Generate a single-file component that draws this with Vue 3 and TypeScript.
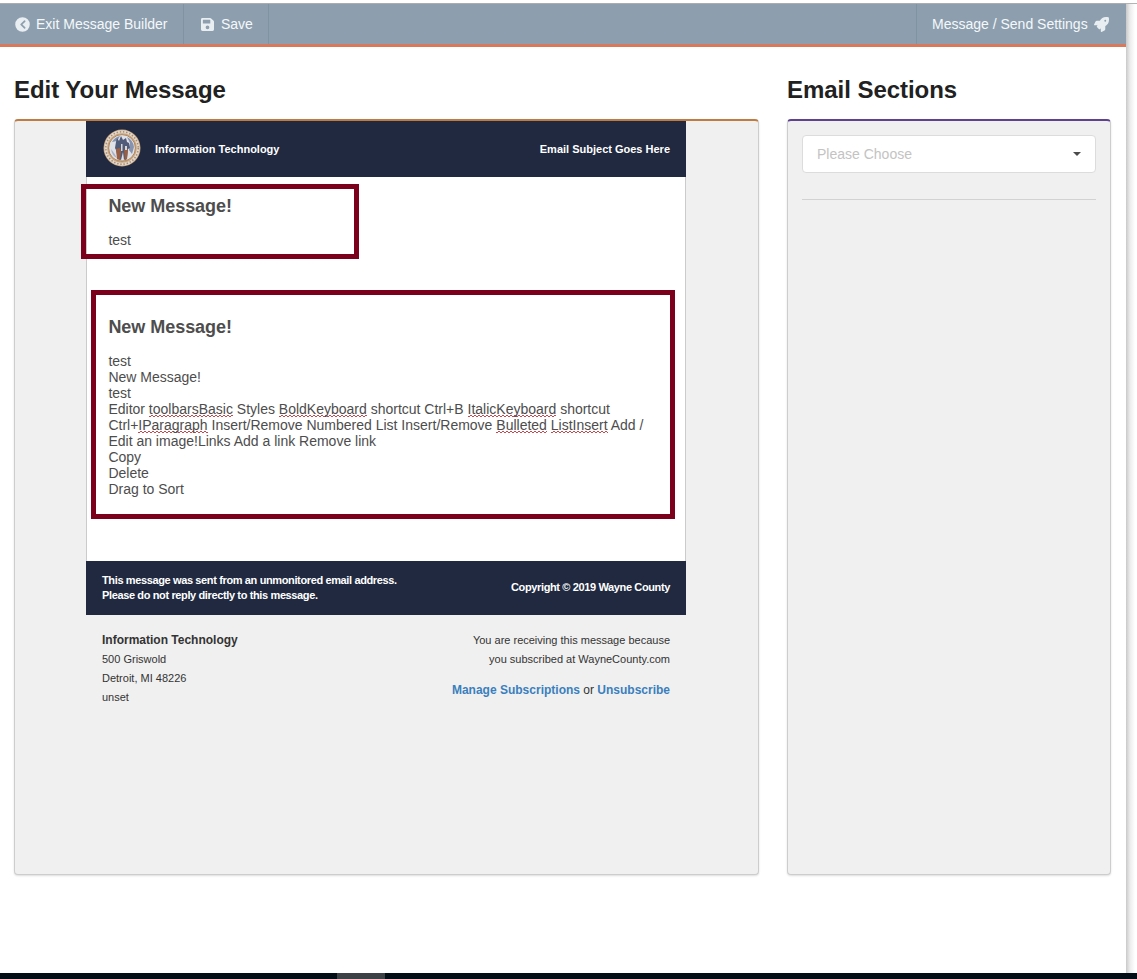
<script setup lang="ts">
interface Word {
  text: string
  flagged?: boolean
}

const editorLines: Word[][] = [
  [
    { text: 'Editor ' },
    { text: 'toolbarsBasic', flagged: true },
    { text: ' Styles ' },
    { text: 'BoldKeyboard', flagged: true },
    { text: ' shortcut Ctrl+B ' },
    { text: 'ItalicKeyboard', flagged: true },
    { text: ' shortcut' },
  ],
  [
    { text: 'Ctrl+' },
    { text: 'IParagraph', flagged: true },
    { text: ' Insert/Remove Numbered List Insert/Remove ' },
    { text: 'Bulleted', flagged: true },
    { text: ' ' },
    { text: 'ListInsert', flagged: true },
    { text: ' Add /' },
  ],
  [{ text: 'Edit an image!Links Add a link Remove link' }],
]
const actions: string[] = ['Copy', 'Delete', 'Drag to Sort']
</script>

<template>
  <div class="screen">
    <div class="window">
      <nav class="toolbar">
        <a class="tool exit">
          <svg class="icon" width="15" height="15" viewBox="0 0 512 512">
            <path fill="currentColor" fill-rule="evenodd" d="M256 8a248 248 0 1 0 0 496a248 248 0 1 0 0-496zM310 395L188 273a24 24 0 0 1 0-34L310 117a24 24 0 0 1 34 0l8 8a24 24 0 0 1 0 34L254 256l98 97a24 24 0 0 1 0 34l-8 8a24 24 0 0 1-34 0z" />
          </svg>
          <span>Exit Message Builder</span>
        </a>
        <a class="tool save">
          <svg class="icon" width="13" height="15" viewBox="0 0 448 512">
            <path fill="currentColor" fill-rule="evenodd" d="M434 130L350 46a48 48 0 0 0-34-14H48A48 48 0 0 0 0 80v352a48 48 0 0 0 48 48h352a48 48 0 0 0 48-48V164a48 48 0 0 0-14-34zM224 416a64 64 0 1 1 0-128a64 64 0 0 1 0 128zM320 111v101a12 12 0 0 1-12 12H76a12 12 0 0 1-12-12V108a12 12 0 0 1 12-12h229z" />
          </svg>
          <span>Save</span>
        </a>
        <a class="tool settings">
          <span>Message / Send Settings</span>
          <svg class="icon" width="15" height="15" viewBox="0 0 512 512">
            <path fill="currentColor" fill-rule="evenodd" d="M505 19c-2-6-6-10-12-12C460 0 435 0 410 0C307 0 245 55 199 128H95c-16 0-36 12-43 27L2 253c-5 12 2 27 22 27h104l-22 22c-13 13-13 33 0 46l58 58c13 13 33 13 46 0l22-22v104c0 18 15 28 27 22l98-49c15-7 27-27 27-43V313c73-46 128-108 128-211c0-25 0-50-7-83zM384 160a32 32 0 1 1 0-64a32 32 0 0 1 0 64z" />
          </svg>
        </a>
      </nav>

      <main class="columns">
        <section class="editor-column">
          <h1>Edit Your Message</h1>
          <div class="panel editor-panel">
            <article class="email">
              <header class="email-header">
                <svg class="seal" width="38" height="38" viewBox="0 0 38 38">
                  <circle cx="19" cy="19" r="18.5" fill="#c9a37b" />
                  <circle cx="19" cy="19" r="16.2" fill="none" stroke="#e3d8ca" stroke-width="3" />
                  <circle cx="19" cy="19" r="16.2" fill="none" stroke="#a58d7c" stroke-width="1.6" stroke-dasharray="1.4 1.8" />
                  <circle cx="19" cy="19" r="13.4" fill="#dfe1e7" stroke="#ad8052" stroke-width=".9" />
                  <path d="M9 13q3-5 8-6l-3 5zM24 8q6 3 7 10l-2 7-3-4 1-7z" fill="#8793ae" />
                  <path d="M8 20q4 5 6 9-5-2-6-9z" fill="#a9b1c5" />
                  <path d="M13 13l1-4 2 3 2-5 2 4 3-2 1 4 2 1 1 5-2 1-1 9-3 2-1-8-2 8-3-1-2-9-1-2z" fill="#505a79" />
                  <path d="M13 20l4-1 1 4-1 8-3-1zM21 21l4-1-1 10-2 2z" fill="#9a5f43" />
                  <path d="M18 15h1.500v7h-1.500zM22 17h2v4h-2z" fill="#d9d5d3" />
                  <path d="M13 30q6 3 13 0l-2 2h-9z" fill="#b6946c" />
                </svg>
                <span class="department">Information Technology</span>
                <span class="subject">Email Subject Goes Here</span>
              </header>
              <div class="email-body">
                <div class="block first">
                  <h2>New Message!</h2>
                  <p>test</p>
                </div>
                <div class="block second">
                  <h2>New Message!</h2>
                  <p>test</p>
                  <p>New Message!</p>
                  <p>test</p>
                  <p v-for="(line, i) in editorLines" :key="i" class="editor-line"><span v-for="(word, j) in line" :key="j" :class="{ flagged: word.flagged }">{{ word.text }}</span></p>
                  <p v-for="action in actions" :key="action">{{ action }}</p>
                </div>
                <div class="highlight highlight-first"></div>
                <div class="highlight highlight-second"></div>
              </div>
              <footer class="email-footer">
                <p>This message was sent from an unmonitored email address.<br />Please do not reply directly to this message.</p>
                <p class="copyright">Copyright © 2019 Wayne County</p>
              </footer>
              <div class="email-meta">
                <address>
                  <strong>Information Technology</strong><br />
                  500 Griswold<br />
                  Detroit, MI 48226<br />
                  unset
                </address>
                <div class="subscription">
                  <p>You are receiving this message because<br />you subscribed at WayneCounty.com</p>
                  <p class="links"><a>Manage Subscriptions</a> or <a>Unsubscribe</a></p>
                </div>
              </div>
            </article>
          </div>
        </section>

        <section class="sections-column">
          <h1>Email Sections</h1>
          <div class="panel sections-panel">
            <div class="dropdown">
              <span>Please Choose</span>
              <i class="caret"></i>
            </div>
            <hr />
          </div>
        </section>
      </main>
    </div>
    <div class="window-shadow"></div>
    <div class="taskbar"><div class="task"></div></div>
  </div>
</template>

<style>
body {
  margin: 0;
  overflow: hidden;
}
</style>

<style scoped>
* {
  box-sizing: border-box;
}
.screen {
  width: 1137px;
  height: 979px;
  padding-top: 3px;
  display: grid;
  grid-template: 970px 6px / 1126px 11px;
  background: #fff;
  color: #212121;
  font-family: "Liberation Sans", Arial, sans-serif;
}
.window {
  border-top: 1px solid #a9adb1;
}
.window-shadow {
  border-top: 1px solid #b4b4b4;
  background: linear-gradient(90deg, #c9c9c9, #ececec 4px, #fff 9px);
}
.taskbar {
  grid-column: 1 / 3;
  background: #030d16;
}
.task {
  width: 48px;
  height: 6px;
  margin-left: 337px;
  background: #3b4145;
}
.toolbar {
  display: flex;
  height: 43px;
  background: #8d9fae;
  border-bottom: 3px solid #d7795a;
  color: #f5f8fa;
  font-size: 14px;
}
.tool {
  display: flex;
  align-items: center;
  height: 40px;
}
.tool .icon {
  flex: none;
  color: #e9eef2;
}
.exit {
  width: 184px;
  padding-left: 15px;
  gap: 6px;
  border-right: 1px solid #8093a2;
}
.save {
  width: 85px;
  padding-left: 17px;
  gap: 7px;
  border-right: 1px solid #8093a2;
}
.settings {
  width: 210px;
  margin-left: auto;
  padding-left: 15px;
  gap: 6px;
  border-left: 1px solid #8093a2;
}
.columns {
  display: flex;
  gap: 28px;
  padding: 28px 0 0 14px;
}
.editor-column {
  width: 745px;
}
.sections-column {
  width: 324px;
}
h1 {
  margin: 0 0 14px;
  font-size: 24px;
  line-height: 30px;
  letter-spacing: -0.04px;
  white-space: nowrap;
}
.panel {
  height: 756px;
  border: 1px solid #cdcdcd;
  border-radius: 4px;
  background: #f0f0f0;
  box-shadow: 0 1px 2px rgba(34, 36, 38, 0.15);
}
.editor-panel {
  padding-left: 71px;
  border-top: 2px solid #bf7c42;
}
.sections-panel {
  padding: 14px;
  border-top: 2px solid #5e428f;
}
.email {
  width: 600px;
}
.email-header {
  display: flex;
  align-items: center;
  height: 56px;
  padding: 0 16px 0 17px;
  background: #20293f;
  color: #fff;
  font-size: 11px;
  font-weight: bold;
}
.seal {
  margin: -3px 14px 0 0;
}
.subject {
  margin-left: auto;
}
.email-body {
  position: relative;
  height: 384px;
  padding: 17px 22px 0 21.4px;
  border: solid #cbcbcb;
  border-width: 0 1px;
  background: #fff;
  color: #4d4d4d;
  font-size: 14px;
  line-height: 16px;
}
.block.second {
  margin-top: 67px;
}
h2 {
  margin: 0 0 14px;
  font-size: 18px;
  line-height: 24px;
  letter-spacing: -0.04px;
}
p {
  margin: 0;
}
.editor-line {
  white-space: pre;
}
.flagged {
  background:
    repeating-linear-gradient(90deg, #c9484d 0 2px, transparent 2px 4px) 0 100% / 100% 1px no-repeat,
    repeating-linear-gradient(90deg, transparent 0 2px, #c9484d 2px 4px) 0 calc(100% - 1px) / 100% 1px no-repeat;
}
.highlight {
  position: absolute;
  border: 5px solid #7b001b;
}
.highlight-first {
  left: -6px;
  top: 7px;
  width: 278px;
  height: 75px;
}
.highlight-second {
  left: 4px;
  top: 113px;
  width: 584px;
  height: 229px;
}
.email-footer {
  display: flex;
  justify-content: space-between;
  align-items: center;
  height: 54px;
  padding: 0 16px;
  background: #20293f;
  color: #fff;
  font-size: 11px;
  font-weight: bold;
  line-height: 15px;
  letter-spacing: -0.37px;
}
.copyright {
  padding-bottom: 2px;
}
.email-meta {
  display: flex;
  justify-content: space-between;
  padding: 16px 16px 0;
  color: #333;
  font-size: 11px;
  line-height: 19px;
}
address {
  font-style: normal;
}
address strong {
  font-size: 12px;
}
.subscription {
  text-align: right;
}
.links {
  margin-top: 12px;
  font-size: 12px;
}
.links a {
  color: #3a7fbd;
  font-weight: bold;
}
.dropdown {
  display: flex;
  align-items: center;
  justify-content: space-between;
  height: 38px;
  padding: 0 14px;
  border: 1px solid #dcdcdc;
  border-radius: 4px;
  background: #fff;
  color: #c3c3c3;
  font-size: 14px;
}
.caret {
  border: 4px solid transparent;
  border-top-color: #4b4b4b;
  border-bottom: 0;
}
hr {
  height: 1px;
  margin: 26px 0 0;
  border: 0;
  background: #d2d2d2;
}
</style>
